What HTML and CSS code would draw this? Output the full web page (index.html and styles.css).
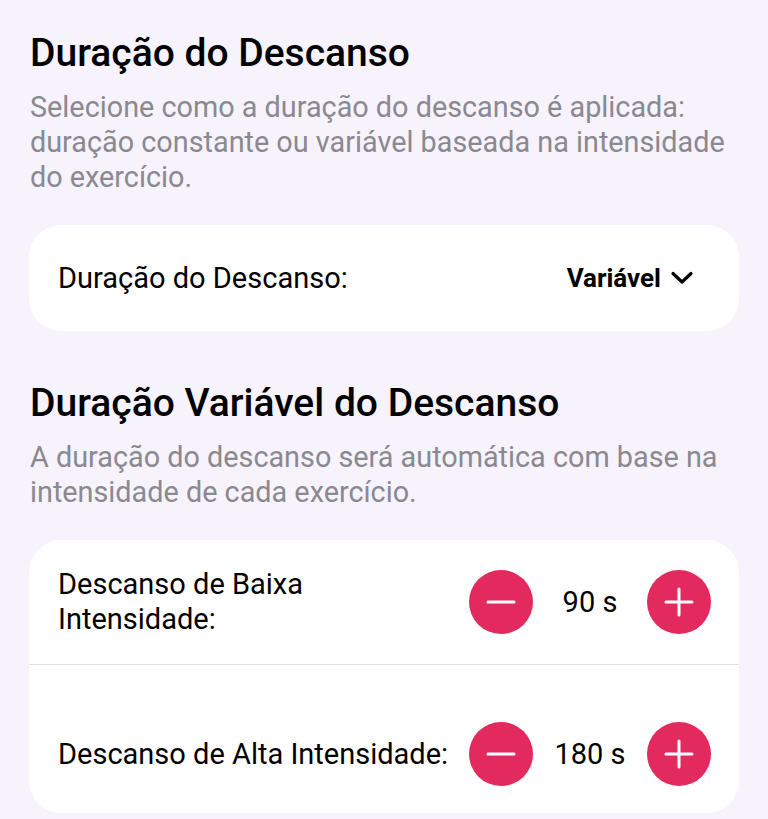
FILE: index.html
```html
<!DOCTYPE html>
<html lang="pt">
<head>
    <meta charset="UTF-8">
    <meta name="viewport" content="width=device-width, initial-scale=1.0">
    <title>Descanso</title>
    <link rel="stylesheet" href="styles.css">
</head>
<body>
    <div class="page">
        <section class="section">
            <h2 class="section-title">Duração do Descanso</h2>
            <p class="section-desc">Selecione como a duração do descanso é aplicada: duração constante ou variável baseada na intensidade do exercício.</p>
            <div class="card">
                <div class="row row-picker">
                    <span class="label">Duração do Descanso:</span>
                    <button class="picker">
                        Variável
                        <svg width="24" height="14" viewBox="0 0 24 14"><path d="M3 2.5 L12 11 L21 2.5" fill="none" stroke="#000" stroke-width="3.2" stroke-linecap="round" stroke-linejoin="round"/></svg>
                    </button>
                </div>
            </div>
        </section>

        <section class="section">
            <h2 class="section-title">Duração Variável do Descanso</h2>
            <p class="section-desc">A duração do descanso será automática com base na intensidade de cada exercício.</p>
            <div class="card">
                <div class="row row-low">
                    <span class="label label-wrap">Descanso de Baixa Intensidade:</span>
                    <div class="stepper">
                        <button class="step-btn">
                            <svg width="30" height="30" viewBox="0 0 30 30"><path d="M2 15 H28" stroke="#fff" stroke-width="3" stroke-linecap="round"/></svg>
                        </button>
                        <span class="value">90 s</span>
                        <button class="step-btn">
                            <svg width="30" height="30" viewBox="0 0 30 30"><path d="M2 15 H28 M15 2 V28" stroke="#fff" stroke-width="3" stroke-linecap="round"/></svg>
                        </button>
                    </div>
                </div>
                <div class="row row-high">
                    <span class="label">Descanso de Alta Intensidade:</span>
                    <div class="stepper">
                        <button class="step-btn">
                            <svg width="30" height="30" viewBox="0 0 30 30"><path d="M2 15 H28" stroke="#fff" stroke-width="3" stroke-linecap="round"/></svg>
                        </button>
                        <span class="value">180 s</span>
                        <button class="step-btn">
                            <svg width="30" height="30" viewBox="0 0 30 30"><path d="M2 15 H28 M15 2 V28" stroke="#fff" stroke-width="3" stroke-linecap="round"/></svg>
                        </button>
                    </div>
                </div>
            </div>
        </section>
    </div>
</body>
</html>
```

FILE: styles.css
```css
* {
    margin: 0;
    padding: 0;
    box-sizing: border-box;
}

body {
    font-family: Roboto, 'Liberation Sans', sans-serif;
    background: #f6f3fd;
    color: #000;
    height: 819px;
    overflow: hidden;
}

.page {
    padding: 31px 29px 0 29px;
    display: flex;
    flex-direction: column;
    gap: 50px;
}

.section-title {
    font-size: 39px;
    font-weight: 500;
    line-height: 44px;
    padding-left: 1px;
}

.section-desc {
    font-size: 28.8px;
    line-height: 35px;
    color: #8a8990;
    padding-left: 1px;
    margin-top: 15px;
    margin-bottom: 30px;
}

.card {
    background: #fff;
    border-radius: 32px;
    overflow: hidden;
}

.row {
    display: flex;
    align-items: center;
    justify-content: space-between;
    padding: 0 28px 0 29px;
}

.row-picker {
    height: 106px;
    padding-right: 45px;
}

.row-low {
    height: 125px;
    border-bottom: 1.5px solid #e0e0e3;
}

.row-high {
    height: 148px;
    padding-top: 30px;
}

.label {
    font-size: 29px;
    line-height: 35px;
}

.label-wrap {
    max-width: 300px;
}

.picker {
    display: flex;
    align-items: center;
    gap: 9px;
    background: none;
    border: none;
    font-family: inherit;
    font-size: 26px;
    font-weight: 700;
    color: #000;
}

.stepper {
    display: flex;
    align-items: center;
}

.step-btn {
    width: 64px;
    height: 64px;
    border-radius: 50%;
    border: none;
    background: #e22a5f;
    display: flex;
    align-items: center;
    justify-content: center;
}

.value {
    width: 114px;
    text-align: center;
    font-size: 29px;
}
```
